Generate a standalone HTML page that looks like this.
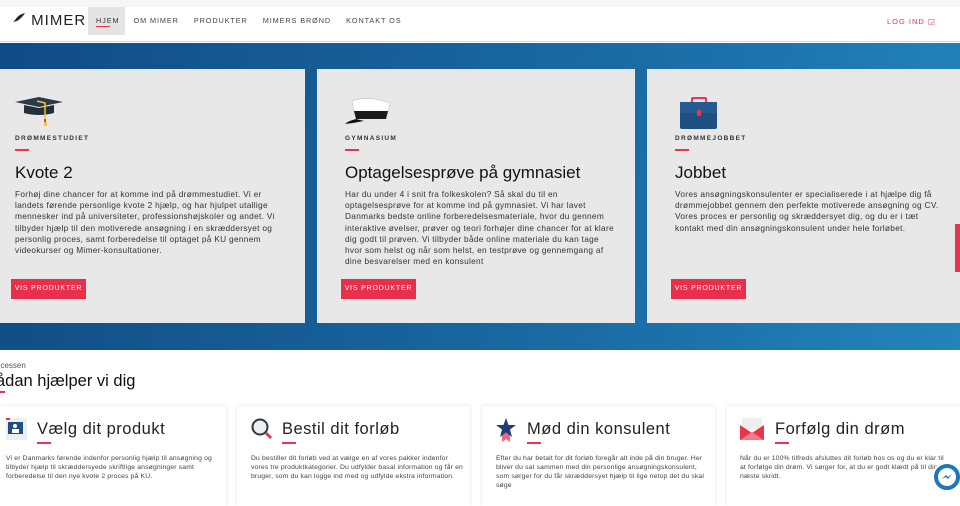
<!DOCTYPE html>
<html><head><meta charset="utf-8"><style>
*{margin:0;padding:0;box-sizing:border-box}
body{width:960px;height:500px;overflow:hidden;background:#fff;font-family:"Liberation Sans",sans-serif;color:#222;position:relative}
.hdr{position:absolute;top:0;left:0;width:960px;height:42px;background:#fff;border-bottom:1px solid #cfd8e0}
.hdr .top{height:7px;background:#f6f6f6}
.logo{position:absolute;left:9px;top:12px;font-size:15px;letter-spacing:1px;color:#222;white-space:nowrap}
.nav{position:absolute;top:7px;left:88px;display:flex;font-size:7.3px;letter-spacing:.9px;color:#444}
.nav div{padding:0 7.5px;height:28px;line-height:28px;white-space:nowrap}
.nav .act{background:#e4e4e4;width:37px;padding:0 8px;margin-right:1px}
.login{position:absolute;right:24px;top:17px;font-size:7.5px;letter-spacing:1px;color:#e8344f}
.band{position:absolute;top:43px;left:0;width:960px;height:307px;background:linear-gradient(100deg,#114b85,#1a6aa3 60%,#2383bb)}
.card{position:absolute;top:69px;height:254px;background:#e8e8e8}
.card .ic{position:absolute;left:15px;top:28px}
.cat{position:absolute;left:15px;top:135px;font-size:6.5px;font-weight:bold;letter-spacing:1.3px;color:#333}
.bar{position:absolute;left:15px;top:149px;width:14px;height:2px;background:#e8344f}
.card h2{position:absolute;left:15px;top:163px;font-weight:normal;font-size:17px;color:#111}
.card p{position:absolute;left:15px;top:189px;font-size:8.3px;line-height:11.2px;color:#333;letter-spacing:.3px;white-space:nowrap}
.btn{position:absolute;left:11px;top:279px;width:75px;height:20px;background:#e8304d;color:#fff;font-size:7px;letter-spacing:.8px;line-height:20px;text-align:center}
.card h2,.card p,.cat,.bar,.btn{margin-top:-69px}
.sec{position:absolute;left:-4px;top:361px;font-size:8px;color:#555}
.sech{position:absolute;left:-4px;top:372px;font-size:16.5px;color:#111}
.secbar{position:absolute;left:0;top:391px;width:5px;height:2px;background:#e8344f}
.c2{position:absolute;top:406px;height:100px;background:#fff;box-shadow:0 0 3px rgba(0,0,0,.12)}
.c2 h3{position:absolute;top:14px;font-weight:normal;font-size:16.5px;color:#222;letter-spacing:.5px;white-space:nowrap}
.c2 .b{position:absolute;top:36px;width:14px;height:2px;background:#e8344f}
.c2 p{position:absolute;top:48px;font-size:6.8px;line-height:9px;color:#444;left:6px;right:6px;letter-spacing:.15px}
.c2 .ic{position:absolute;top:12px}
</style></head><body>
<div class="hdr"><div class="top"></div>
<div class="logo"><svg width="17" height="13" viewBox="0 0 17 13" style="vertical-align:-1px"><path d="M1 12 L6 7 Q10 1 16 0 Q13 5 8 8 L4 9 Z" fill="#222"/></svg> MIMER</div>
<div class="nav"><div class="act" style="color:#333">HJEM</div><div>OM MIMER</div><div>PRODUKTER</div><div>MIMERS BRØND</div><div>KONTAKT OS</div></div>
<div style="position:absolute;left:96px;top:26px;width:14px;height:1px;background:#e8344f"></div>
<div class="login">LOG IND &#9714;</div>
</div>
<div class="band"></div>
<div class="card" style="left:0;width:305px">
<svg class="ic" width="48" height="30" viewBox="0 0 48 30"><path d="M0 5 L24 0 L48 5 L24 10Z" fill="#2b3a47"/><path d="M9 8 L9 16 Q24 20 39 16 L39 8 L24 11Z" fill="#22303c"/><path d="M22 4 L30 6 L30 22" stroke="#f3c33c" stroke-width="1.5" fill="none"/><rect x="29" y="22" width="2" height="3" fill="#e8344f"/><rect x="29" y="25" width="3" height="4" fill="#f3c33c"/></svg>
<div class="cat">DRØMMESTUDIET</div><div class="bar"></div>
<h2>Kvote 2</h2>
<p>Forhøj dine chancer for at komme ind på drømmestudiet. Vi er<br>landets førende personlige kvote 2 hjælp, og har hjulpet utallige<br>mennesker ind på universiteter, professionshøjskoler og andet. Vi<br>tilbyder hjælp til den motiverede ansøgning i en skræddersyet og<br>personlig proces, samt forberedelse til optaget på KU gennem<br>videokurser og Mimer-konsultationer.</p>
<div class="btn">VIS PRODUKTER</div></div>
<div class="card" style="left:317px;width:318px">
<svg class="ic" style="left:27px" width="48" height="30" viewBox="0 0 48 30"><path d="M8 4 Q24 -2 46 6 L44 16 L10 16Z" fill="#fff" stroke="#ccc" stroke-width=".8"/><path d="M10 14 L44 14 L42 22 L12 22Z" fill="#1a1a1a"/><path d="M12 22 Q4 24 1 27 Q10 26 20 24Z" fill="#111"/></svg>
<div class="cat" style="left:28px">GYMNASIUM</div><div class="bar" style="left:28px"></div>
<h2 style="left:28px">Optagelsesprøve på gymnasiet</h2>
<p style="left:28px">Har du under 4 i snit fra folkeskolen? Så skal du til en<br>optagelsesprøve for at komme ind på gymnasiet. Vi har lavet<br>Danmarks bedste online forberedelsesmateriale, hvor du gennem<br>interaktive øvelser, prøver og teori forhøjer dine chancer for at klare<br>dig godt til prøven. Vi tilbyder både online materiale du kan tage<br>hvor som helst og når som helst, en testprøve og gennemgang af<br>dine besvarelser med en konsulent</p>
<div class="btn" style="left:24px">VIS PRODUKTER</div></div>
<div class="card" style="left:647px;width:313px">
<svg class="ic" style="left:33px" width="38" height="32" viewBox="0 0 38 32"><rect x="12" y="1" width="14" height="6" rx="1" fill="none" stroke="#e8344f" stroke-width="2"/><rect x="0" y="5" width="37" height="27" rx="2" fill="#1e4f80"/><path d="M0 5 L37 5 L37 16 L0 16Z" fill="#245c93"/><rect x="17" y="13" width="4" height="6" fill="#e8344f"/></svg>
<div class="cat" style="left:28px">DRØMMEJOBBET</div><div class="bar" style="left:28px"></div>
<h2 style="left:28px">Jobbet</h2>
<p style="left:28px">Vores ansøgningskonsulenter er specialiserede i at hjælpe dig få<br>drømmejobbet gennem den perfekte motiverede ansøgning og CV.<br>Vores proces er personlig og skræddersyet dig, og du er i tæt<br>kontakt med din ansøgningskonsulent under hele forløbet.</p>
<div class="btn" style="left:24px">VIS PRODUKTER</div></div>
<div style="position:absolute;left:955px;top:224px;width:5px;height:48px;background:#e8344f"></div>
<div class="sec">ocessen</div><div class="sech">ådan hjælper vi dig</div><div class="secbar"></div>
<div class="c2" style="left:0;width:226px"><svg class="ic" style="left:6px" width="21" height="22" viewBox="0 0 21 22"><rect width="21" height="22" fill="#eee"/><rect x="0" y="0" width="4" height="2" fill="#e8344f"/><rect x="2" y="4" width="15" height="12" fill="#1e4f80"/><circle cx="9" cy="8" r="2" fill="#fff"/><rect x="6" y="11" width="7" height="4" fill="#fff"/></svg><h3 style="left:37px">Vælg dit produkt</h3><div class="b" style="left:37px"></div><p>Vi er Danmarks førende indenfor personlig hjælp til ansøgning og tilbyder hjælp til skræddersyede skriftlige ansøgninger samt forberedelse til den nye kvote 2 proces på KU.</p></div>
<div class="c2" style="left:237px;width:233px"><svg class="ic" style="left:14px" width="22" height="22" viewBox="0 0 22 22"><circle cx="9" cy="9" r="7.5" fill="#eee" stroke="#2b3a47" stroke-width="2"/><path d="M15 15 L20 20" stroke="#e8344f" stroke-width="3"/></svg><h3 style="left:45px">Bestil dit forløb</h3><div class="b" style="left:45px"></div><p style="left:14px">Du bestiller dit forløb ved at vælge en af vores pakker indenfor vores tre produktkategorier. Du udfylder basal information og får en bruger, som du kan logge ind med og udfylde ekstra information.</p></div>
<div class="c2" style="left:482px;width:233px"><svg class="ic" style="left:14px" width="20" height="24" viewBox="0 0 20 24"><path d="M6 15 L14 15 L14 24 L10 21 L6 24Z" fill="#f06a7a"/><path d="M10 0 L12.5 7 L20 7 L14 11.5 L16 19 L10 14.5 L4 19 L6 11.5 L0 7 L7.5 7Z" fill="#1e3f73"/></svg><h3 style="left:45px">Mød din konsulent</h3><div class="b" style="left:45px"></div><p style="left:14px">Efter du har betalt for dit forløb foregår alt inde på din bruger. Her bliver du sat sammen med din personlige ansøgningskonsulent, som sørger for du får skræddersyet hjælp til lige netop det du skal søge</p></div>
<div class="c2" style="left:727px;width:240px"><svg class="ic" style="left:13px" width="24" height="22" viewBox="0 0 24 22"><rect x="2" y="0" width="20" height="12" fill="#eee"/><path d="M0 7 L12 15 L24 7 L24 22 L0 22Z" fill="#e8344f"/><path d="M0 22 L12 14 L24 22Z" fill="#f27a86"/></svg><h3 style="left:48px">Forfølg din drøm</h3><div class="b" style="left:48px"></div><p style="left:13px;right:20px">Når du er 100% tilfreds afsluttes dit forløb hos os og du er klar til at forfølge din drøm. Vi sørger for, at du er godt klædt på til din næste skridt.</p></div>
<div style="position:absolute;left:932px;top:462px;width:30px;height:30px;border-radius:50%;background:#1d77b8;border:2px solid #fff"><svg width="26" height="26" viewBox="0 0 26 26"><circle cx="13" cy="13" r="9" fill="#fff"/><path d="M8 15 L12 11 L14 13 L18 10 L14 15 L12 13Z" fill="#1d77b8"/></svg></div>
</body></html>
